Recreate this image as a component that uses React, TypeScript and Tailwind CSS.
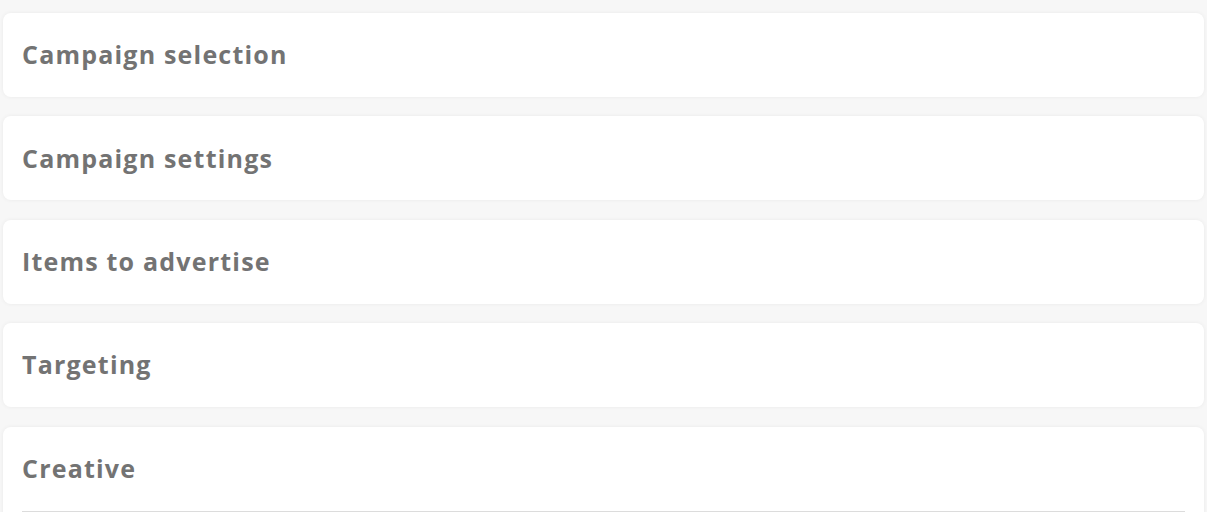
const sections = [
  "Campaign selection",
  "Campaign settings",
  "Items to advertise",
  "Targeting",
];

function Card({ title, divider }: { title: string; divider?: boolean }) {
  return (
    <section className="rounded-lg bg-white shadow-[0_0_4px_rgba(0,0,0,0.06)]">
      <div className="flex h-[84px] items-center px-[19px]">
        <h2 className="text-[25px] font-bold tracking-[1.2px] text-[#737373]">{title}</h2>
      </div>
      {divider && <div className="mx-[19px] h-px bg-[#dcdcdc]" />}
      {divider && <div className="h-[40px]" />}
    </section>
  );
}

export default function App() {
  return (
    <div
      className="min-h-screen bg-[#f7f7f7] px-[3px] pt-[13px]"
      style={{ fontFamily: "'Open Sans', 'Noto Sans', sans-serif" }}
    >
      <div className="flex flex-col gap-[19.4px]">
        {sections.map((s) => (
          <Card key={s} title={s} />
        ))}
        <Card title="Creative" divider />
      </div>
    </div>
  );
}
